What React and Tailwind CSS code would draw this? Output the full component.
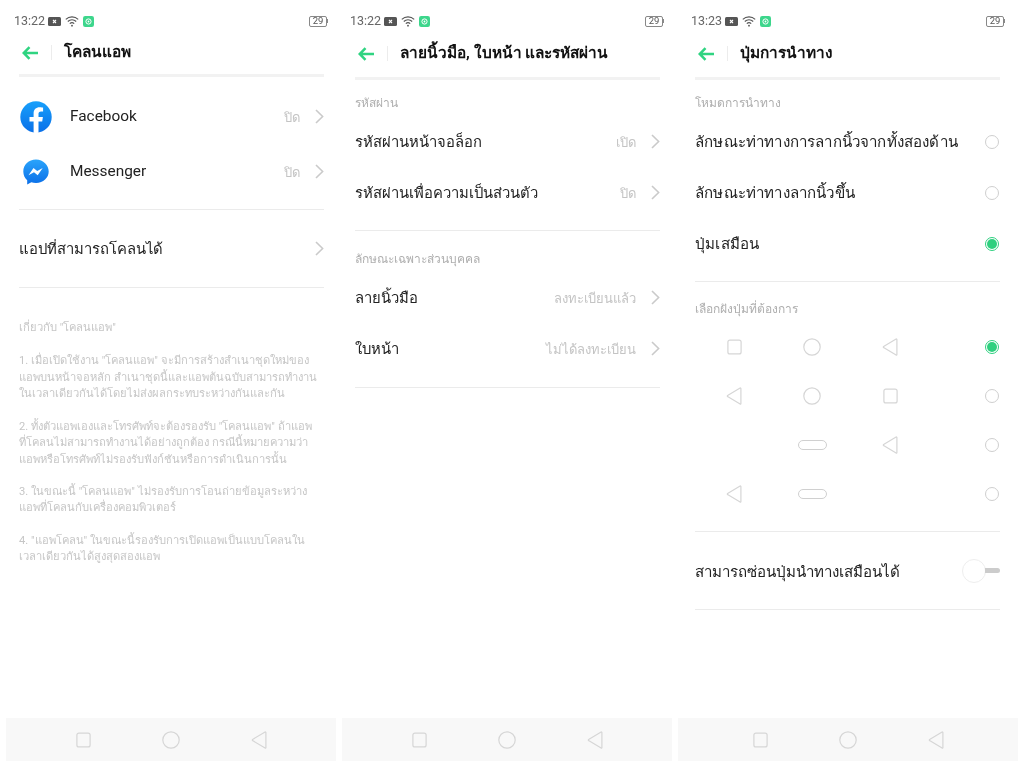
import React from "react";

function Sq({ c = "#d6d6d6" }) {
  return <svg width="15" height="16" viewBox="0 0 15 16" fill="none" stroke={c} strokeWidth="1.2"><rect x=".9" y="1.1" width="13.2" height="13.8" rx="2" /></svg>;
}
function Ci({ c = "#d6d6d6" }) {
  return <svg width="18" height="18" viewBox="0 0 18 18" fill="none" stroke={c} strokeWidth="1.2"><circle cx="9" cy="9" r="8.2" /></svg>;
}
function Tr({ c = "#d6d6d6" }) {
  return <svg width="16" height="18" viewBox="0 0 16 18" fill="none" stroke={c} strokeWidth="1.2" strokeLinejoin="round"><path d="M14.9 1.4v15.2c0 .5-.4.7-.8.4L1.6 9.6c-.4-.2-.4-.9 0-1.2L14.1 1c.4-.2.8 0 .8.4z" /></svg>;
}
function Pill() {
  return <div className="w-[29px] h-[10px] rounded-full border border-[#d0d0d0]" />;
}
function Chevron() {
  return <svg width="9" height="15" viewBox="0 0 9 15" fill="none" stroke="#cacaca" strokeWidth="1.6" className="mb-[1px] shrink-0"><path d="M1 1l6.6 6.5L1 14" /></svg>;
}
function Radio({ on }) {
  return on ? (
    <div className="w-[14px] h-[14px] rounded-full border border-[#2fd07f] flex items-center justify-center shrink-0">
      <div className="w-[10px] h-[10px] rounded-full bg-[#2fd07f]" />
    </div>
  ) : (
    <div className="w-[14px] h-[14px] rounded-full border border-[#cfcfcf] shrink-0" />
  );
}
function Status({ time, cls }) {
  return (
    <div className={"h-[42px] flex items-center justify-between text-[#666] " + cls}>
      <div className="flex items-center">
        <span className="text-[12.5px] font-['Roboto',sans-serif] w-[34px]">{time}</span>
        <svg width="13" height="9" viewBox="0 0 13 9"><rect width="13" height="9" rx="1.5" fill="#555" /><path d="M5 3l3 3M8 3L5 6" stroke="#fff" strokeWidth="1.1" /></svg>
        <svg width="14" height="11" viewBox="0 0 14 11" fill="none" stroke="#555" strokeWidth="1.1" className="ml-[4px]"><path d="M.8 3.4a9 9 0 0 1 12.4 0M2.8 5.5a6 6 0 0 1 8.4 0M4.8 7.6a3.2 3.2 0 0 1 4.4 0" /><circle cx="7" cy="9.7" r=".9" fill="#555" stroke="none" /></svg>
        <svg width="11" height="11" viewBox="0 0 11 11" className="ml-[4px]"><rect width="11" height="11" rx="2.2" fill="#3dd68c" /><circle cx="5.5" cy="5.5" r="2.6" fill="none" stroke="#fff" strokeWidth="1" /><circle cx="5.5" cy="5.5" r=".9" fill="#fff" /></svg>
      </div>
      <div className="flex items-center">
        <div className="w-[18px] h-[11px] border border-[#888] rounded-[2px] flex items-center justify-center text-[9.5px] leading-none font-['Roboto',sans-serif] text-[#555]">29</div>
        <div className="w-[1px] h-[4px] bg-[#888]" />
      </div>
    </div>
  );
}
function Header({ title, h, pb }) {
  return (
    <div className={"flex items-center border-b-[3px] border-[#f2f2f2] " + pb}>
      <div className={"flex items-center w-full " + h}>
        <svg width="16" height="14" viewBox="0 0 16 14" fill="none" stroke="#2fd481" strokeWidth="2.5" className="ml-[3px]"><path d="M16 7H2M7.5 1.2L1.7 7l5.8 5.8" /></svg>
        <div className="w-[1px] h-[15px] bg-[#ececec] ml-[13px]" />
        <span className="ml-[12px] text-[15.4px] font-bold text-[#111] whitespace-nowrap">{title}</span>
      </div>
    </div>
  );
}
function Label({ children, cls }) {
  return <div className={"h-[26px] flex items-center text-[12px] text-[#aeaeae] font-medium " + cls}>{children}</div>;
}
function Row({ text, val, h = "h-[51px]", icon, latin }) {
  return (
    <div className={"flex items-center " + h}>
      {icon}
      <span className={"flex-1 text-[#222] whitespace-nowrap " + (latin ? "text-[15.4px]" : "text-[14.8px] pt-[2px]")}>{text}</span>
      {val && <span className="text-[13px] pt-[2px] text-[#c4c4c4] mr-[15px] whitespace-nowrap">{val}</span>}
      <Chevron />
    </div>
  );
}
function RadioRow({ text, on }) {
  return (
    <div className="flex items-center justify-between h-[51px]">
      <span className="text-[15.1px] tracking-[0.17px] pt-[1px] text-[#222] whitespace-nowrap">{text}</span>
      <div className="mr-[1px]"><Radio on={on} /></div>
    </div>
  );
}
function Rule({ cls = "" }) {
  return <div className={"h-[1px] bg-[#ebebeb] " + cls} />;
}
function NavBar({ cls }) {
  return (
    <div className={"h-[43px] bg-[#f8f8f8] flex items-center shrink-0 " + cls}>
      <Sq />
      <div className="mx-[71px]"><Ci /></div>
      <Tr />
    </div>
  );
}
function Fb() {
  return (
    <svg width="32" height="32" viewBox="0 0 32 32" className="mr-[18px] ml-[1px] shrink-0">
      <defs><linearGradient id="fb" x1="0" y1="0" x2="0" y2="1"><stop offset="0" stopColor="#18a0fb" /><stop offset="1" stopColor="#0a6fe8" /></linearGradient></defs>
      <circle cx="16" cy="16" r="15.7" fill="url(#fb)" />
      <path d="M22.2 20.5l.7-4.6h-4.4v-3c0-1.3.6-2.5 2.6-2.5h2V6.5s-1.8-.3-3.5-.3c-3.6 0-6 2.2-6 6.1v3.600H9.500v4.600h4.100v11.200a16 16 0 0 0 4.900 0V20.500z" fill="#fff" />
    </svg>
  );
}
function Ms() {
  return (
    <svg width="32" height="28" viewBox="0 0 32 28" className="mr-[18px] ml-[1px] shrink-0">
      <defs><linearGradient id="ms" x1="0" y1="0" x2="0" y2="1"><stop offset="0" stopColor="#2aa4fb" /><stop offset="1" stopColor="#0b6fe8" /></linearGradient></defs>
      <path d="M16 1.5C8.7 1.5 3.3 6.7 3.3 13.5c0 3.6 1.5 6.6 3.9 8.7v4.3l4.1-2.200c1.500.4 3 .6 4.700.6 7.300 0 12.700-5.200 12.700-11.400S23.300 1.500 16 1.500z" fill="url(#ms)" />
      <path d="M8.500 17.200l5-7.200 3.700 3 5.500-3-5 7.200-3.700-3z" fill="#fff" />
    </svg>
  );
}

const about = [
  ["เกี่ยวกับ \"โคลนแอพ\""],
  ["1. เมื่อเปิดใช้งาน \"โคลนแอพ\" จะมีการสร้างสำเนาชุดใหม่ของ", "แอพบนหน้าจอหลัก สำเนาชุดนี้และแอพต้นฉบับสามารถทำงาน", "ในเวลาเดียวกันได้โดยไม่ส่งผลกระทบระหว่างกันและกัน"],
  ["2. ทั้งตัวแอพเองและโทรศัพท์จะต้องรองรับ \"โคลนแอพ\" ถ้าแอพ", "ที่โคลนไม่สามารถทำงานได้อย่างถูกต้อง กรณีนี้หมายความว่า", "แอพหรือโทรศัพท์ไม่รองรับฟังก์ชันหรือการดำเนินการนั้น"],
  ["3. ในขณะนี้ \"โคลนแอพ\" ไม่รองรับการโอนถ่ายข้อมูลระหว่าง", "แอพที่โคลนกับเครื่องคอมพิวเตอร์"],
  ["4. \"แอพโคลน\" ในขณะนี้รองรับการเปิดแอพเป็นแบบโคลนใน", "เวลาเดียวกันได้สูงสุดสองแอพ"],
];

function Pattern({ items, on }) {
  return (
    <div className="flex items-center h-[49px]">
      {items.map((it, i) => (
        <div key={i} className="w-[78px] flex items-center justify-center">
          {it === "s" && <Sq />}
          {it === "c" && <Ci />}
          {it === "t" && <Tr />}
          {it === "p" && <Pill />}
        </div>
      ))}
      <div className="ml-auto mr-[1px]"><Radio on={on} /></div>
    </div>
  );
}

export default function App() {
  return (
    <div className="w-[1024px] h-[768px] bg-white overflow-hidden flex pl-[6px] gap-[6px] antialiased blur-[0.3px] font-['Roboto','Noto_Sans',sans-serif]">
      <div className="w-[330px] h-full flex flex-col">
        <Status time="13:22" cls="pl-[8px] pr-[8px]" />
        <div className="flex-1 ml-[13px] mr-[12px]">
          <Header title="โคลนแอพ" h="h-[21px]" pb="pb-[11px]" />
          <div className="pt-[12px]">
            <Row latin text="Facebook" val="ปิด" h="h-[55px]" icon={<Fb />} />
            <Row latin text="Messenger" val="ปิด" h="h-[55px]" icon={<Ms />} />
          </div>
          <Rule cls="mt-[10px]" />
          <Row text="แอปที่สามารถโคลนได้" h="h-[77px]" />
          <Rule />
          <div className="pt-[32px] text-[11.2px] leading-[16.5px] text-[#c6c6c6] whitespace-nowrap flex flex-col gap-[15.75px]">
            {about.map((p, i) => (
              <div key={i} className="first:mb-[1px]">{p.map((l, j) => <div key={j}>{l}</div>)}</div>
            ))}
          </div>
        </div>
        <NavBar cls="pl-[70px] mb-[7px]" />
      </div>

      <div className="w-[330px] h-full flex flex-col">
        <Status time="13:22" cls="pl-[8px] pr-[8px]" />
        <div className="flex-1 ml-[13px] mr-[12px]">
          <Header title="ลายนิ้วมือ, ใบหน้า และรหัสผ่าน" h="h-[23px]" pb="pb-[12px]" />
          <Label cls="mt-[10px]">รหัสผ่าน</Label>
          <Row text="รหัสผ่านหน้าจอล็อก" val="เปิด" />
          <Row text="รหัสผ่านเพื่อความเป็นส่วนตัว" val="ปิด" />
          <Rule cls="mt-[12px]" />
          <Label cls="mt-[15px]">ลักษณะเฉพาะส่วนบุคคล</Label>
          <Row text="ลายนิ้วมือ" val="ลงทะเบียนแล้ว" />
          <Row text="ใบหน้า" val="ไม่ได้ลงทะเบียน" />
          <Rule cls="mt-[13px]" />
        </div>
        <NavBar cls="pl-[70px] mb-[7px]" />
      </div>

      <div className="w-[340px] h-full flex flex-col">
        <Status time="13:23" cls="pl-[13px] pr-[13px]" />
        <div className="flex-1 ml-[17px] mr-[18px]">
          <Header title="ปุ่มการนำทาง" h="h-[23px]" pb="pb-[12px]" />
          <Label cls="mt-[10px]">โหมดการนำทาง</Label>
          <RadioRow text="ลักษณะท่าทางการลากนิ้วจากทั้งสองด้าน" />
          <RadioRow text="ลักษณะท่าทางลากนิ้วขึ้น" />
          <RadioRow text="ปุ่มเสมือน" on />
          <Rule cls="mt-[12px]" />
          <Label cls="mt-[14px]">เลือกฝังปุ่มที่ต้องการ</Label>
          <Pattern items={["s", "c", "t"]} on />
          <Pattern items={["t", "c", "s"]} />
          <Pattern items={["", "p", "t"]} />
          <Pattern items={["t", "p", ""]} />
          <Rule cls="mt-[13px]" />
          <div className="flex items-center justify-between h-[77px]">
            <span className="text-[15.1px] pt-[3px] text-[#222] whitespace-nowrap">สามารถซ่อนปุ่มนำทางเสมือนได้</span>
            <div className="flex items-center">
              <div className="w-[24px] h-[24px] rounded-full border border-[#eeeeee] bg-white" />
              <div className="w-[15px] h-[5px] bg-[#cccccc] rounded-r-full -ml-[1px]" />
            </div>
          </div>
          <Rule />
        </div>
        <NavBar cls="pl-[75px] mb-[7px]" />
      </div>
    </div>
  );
}
